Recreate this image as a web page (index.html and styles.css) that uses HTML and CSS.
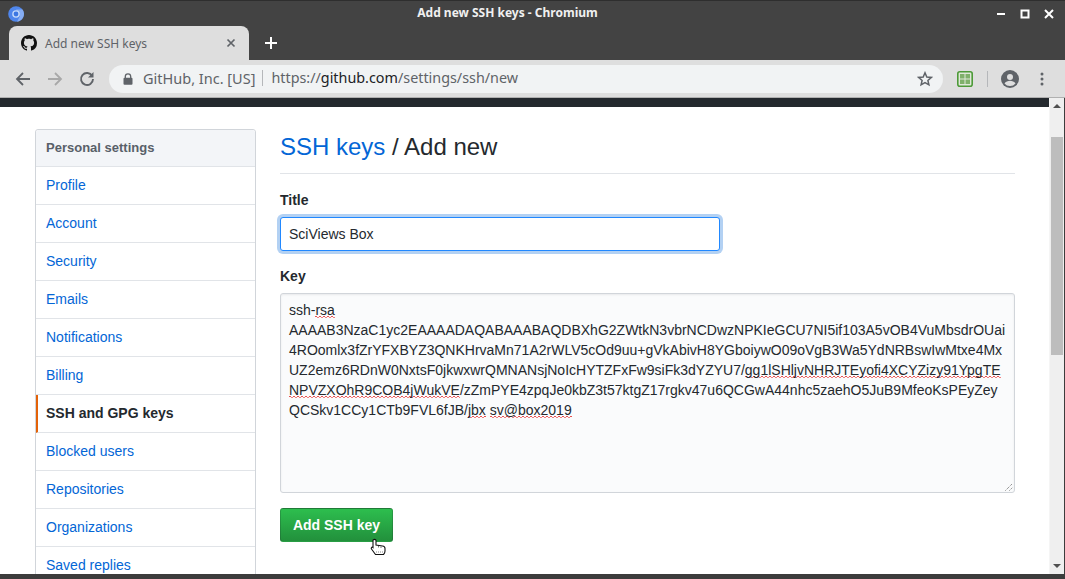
FILE: index.html
```html
<!DOCTYPE html>
<html lang="en">
<head>
<meta charset="utf-8">
<title>Add new SSH keys - Chromium</title>
<link rel="stylesheet" href="styles.css">
</head>
<body>
<div class="window">
  <header class="frame">
    <div class="titlebar">
      <svg class="app-icon" viewBox="0 0 16 16" width="16" height="16"><circle cx="8" cy="8" r="7.800" fill="#4f86ec"/><path d="M8 3.500h6.600A7.800 7.800 0 0 1 9 15.700L12 10z" fill="#86adf3"/><circle cx="8" cy="8" r="3.800" fill="#c4d9fa"/><circle cx="8" cy="8" r="2.400" fill="#3b76e2"/></svg>
      <div class="window-title">Add new SSH keys - Chromium</div>
      <div class="window-controls">
        <svg viewBox="0 0 10 10" width="10" height="10"><path d="M1 5h8" stroke="#fff" stroke-width="2"/></svg>
        <svg viewBox="0 0 10 10" width="10" height="10"><path d="M1.500 1.500h7v7h-7z" fill="none" stroke="#fff" stroke-width="2"/></svg>
        <svg viewBox="0 0 10 10" width="10" height="10"><path d="M1 1l8 8M9 1l-8 8" stroke="#fff" stroke-width="2"/></svg>
      </div>
    </div>
    <div class="tabstrip">
      <div class="tab">
        <svg class="favicon" viewBox="0 0 16 16" width="16" height="16"><path fill="#111" d="M8 0C3.580 0 0 3.580 0 8c0 3.540 2.290 6.530 5.470 7.590.4.070.55-.17.55-.38 0-.19-.01-.82-.01-1.490-2.010.37-2.530-.49-2.690-.94-.09-.23-.48-.94-.82-1.130-.28-.15-.68-.52-.01-.53.63-.01 1.080.58 1.230.82.72 1.210 1.870.87 2.330.66.07-.52.28-.87.51-1.070-1.780-.2-3.640-.89-3.640-3.950 0-.87.31-1.590.82-2.150-.08-.2-.36-1.020.08-2.120 0 0 .67-.21 2.200.82.64-.18 1.320-.27 2-.27s1.360.09 2 .27c1.530-1.040 2.200-.82 2.200-.82.44 1.100.16 1.920.08 2.120.51.56.82 1.270.82 2.150 0 3.070-1.870 3.750-3.650 3.950.29.25.54.73.54 1.480 0 1.070-.01 1.930-.01 2.200 0 .21.15.46.55.38A8.010 8.010 0 0 0 16 8c0-4.420-3.580-8-8-8z"/></svg>
        <span class="tab-title">Add new SSH keys</span>
        <svg class="tab-close" viewBox="0 0 10 10" width="10" height="10"><path d="M1.500 1.500l7 7M8.500 1.500l-7 7" stroke="#5f6368" stroke-width="1.700"/></svg>
      </div>
      <svg class="new-tab" viewBox="0 0 12 12" width="12" height="12"><path d="M6 0v12M0 6h12" stroke="#fff" stroke-width="2"/></svg>
    </div>
  </header>
  <nav class="toolbar">
    <svg class="nav-icon" viewBox="0 0 16 16" width="16" height="16"><path d="M15 8H2M8 2L2 8l6 6" fill="none" stroke="#5f6368" stroke-width="1.800"/></svg>
    <svg class="nav-icon" viewBox="0 0 16 16" width="16" height="16"><path d="M1 8h13M8 2l6 6-6 6" fill="none" stroke="#a8a8a8" stroke-width="1.800"/></svg>
    <svg class="nav-icon" viewBox="0 0 16 16" width="16" height="16"><path d="M13.200 5A6 6 0 1 0 14 8" fill="none" stroke="#5f6368" stroke-width="1.900"/><path d="M14.500 1v5.500H9z" fill="#5f6368"/></svg>
    <div class="omnibox">
      <svg class="lock" viewBox="0 0 10 12" width="10" height="12"><path d="M2.300 5V3.500a2.700 2.700 0 0 1 5.400 0V5" fill="none" stroke="#5f6368" stroke-width="1.300"/><rect x="0.500" y="4.800" width="9" height="7" rx="1" fill="#5f6368"/></svg>
      <span class="org">GitHub, Inc. [US]</span>
      <span class="url"><span class="scheme">https://</span>github.com<span class="scheme">/settings/ssh/new</span></span>
      <svg class="star" viewBox="0 0 16 16" width="16" height="16"><path d="M8 1.800l1.800 4.200 4.500.4-3.400 3 1 4.400L8 11.500l-3.900 2.300 1-4.400-3.400-3 4.500-.4z" fill="none" stroke="#5f6368" stroke-width="1.500"/></svg>
    </div>
    <svg class="ext" viewBox="0 0 16 16" width="16" height="16"><rect x="0.800" y="0.800" width="14.400" height="14.400" rx="2" fill="#dfe8d8" stroke="#4d9a38" stroke-width="1.600"/><path d="M3 3h4.500v4.500H3zM8.500 3H13v4.500H8.500zM3 8.500h4.500V13H3zM8.500 8.500H13V13H8.500z" fill="#7fb06a"/></svg>
    <span class="tool-sep"></span>
    <svg class="avatar" viewBox="0 0 18 18" width="18" height="18"><circle cx="9" cy="9" r="9" fill="#5f6368"/><circle cx="9" cy="7" r="3" fill="#dedede"/><path d="M3.500 13.500c1-2 3.500-2.800 5.500-2.800s4.500.8 5.500 2.800A7 7 0 0 1 9 16a7 7 0 0 1-5.500-2.500z" fill="#dedede"/></svg>
    <svg class="menu" viewBox="0 0 4 14" width="4" height="14"><circle cx="2" cy="2" r="1.500" fill="#5f6368"/><circle cx="2" cy="7" r="1.500" fill="#5f6368"/><circle cx="2" cy="12" r="1.500" fill="#5f6368"/></svg>
  </nav>
  <div class="viewport">
    <div class="page">
      <div class="gh-header"></div>
      <div class="content">
        <aside class="side">
          <div class="side-head">Personal settings</div>
          <a class="side-item">Profile</a>
          <a class="side-item">Account</a>
          <a class="side-item">Security</a>
          <a class="side-item">Emails</a>
          <a class="side-item">Notifications</a>
          <a class="side-item">Billing</a>
          <a class="side-item selected">SSH and GPG keys</a>
          <a class="side-item">Blocked users</a>
          <a class="side-item">Repositories</a>
          <a class="side-item">Organizations</a>
          <a class="side-item">Saved replies</a>
        </aside>
        <main class="main">
          <h1 class="heading"><a>SSH keys</a> / Add new</h1>
          <label class="label">Title</label>
          <div class="input">SciViews Box</div>
          <label class="label key-label">Key</label>
          <div class="textarea">
            <div class="line">ssh-<span class="sp">rsa</span></div>
            <div class="line">AAAAB3NzaC1yc2EAAAADAQABAAABAQDBXhG2ZWtkN3vbrNCDwzNPKIeGCU7NI5if103A5vOB4VuMbsdrOUai</div>
            <div class="line">4ROomlx3fZrYFXBYZ3QNKHrvaMn71A2rWLV5cOd9uu+gVkAbivH8YGboiywO09oVgB3Wa5YdNRBswIwMtxe4Mx</div>
            <div class="line">UZ2emz6RDnW0NxtsF0jkwxwrQMNANsjNoIcHYTZFxFw9siFk3dYZYU7/<span class="sp">gg1lSHljvNHRJTEyofi4XCYZizy91YpgTE</span></div>
            <div class="line"><span class="sp">NPVZXOhR9COB4jWukVE</span>/zZmPYE4zpqJe0kbZ3t57ktgZ17rgkv47u6QCGwA44nhc5zaehO5JuB9MfeoKsPEyZey</div>
            <div class="line">QCSkv1CCy1CTb9FVL6fJB/<span class="sp">jbx</span> <span class="sp">sv@box2019</span></div>
            <svg class="grip" viewBox="0 0 8 8" width="8" height="8"><path d="M0.500 7.500l7-7M4.500 7.500l3-3" stroke="#666" stroke-width="1" stroke-dasharray="1 1"/></svg>
          </div>
          <div class="actions">
            <button class="btn">Add SSH key</button>
            <svg class="cursor" viewBox="0 0 16 18" width="16" height="18"><path d="M3 2.500c0-1.500 3-1.500 3 0V7l6.500 1c1.500.2 2.500 1 2.500 2.500V13c0 2-1 3-1.500 3.500H5.500L1.500 11c-.8-1 .3-2.500 1.500-1.500z" fill="#fff" stroke="#111" stroke-width="1.100"/><path d="M8.500 8v1.500M11 8.500V10" stroke="#555" stroke-width="0.800"/><path d="M6 14h7" stroke="#888" stroke-width="1" stroke-dasharray="1 1"/></svg>
          </div>
        </main>
      </div>
    </div>
    <div class="scrollbar">
      <span class="arrow up"></span>
      <div class="track"><div class="thumb"></div></div>
      <span class="arrow down"></span>
    </div>
  </div>
  <div class="bottom"></div>
</div>
</body>
</html>
```
FILE: styles.css
```css
* { box-sizing: border-box; }
html, body { margin: 0; padding: 0; height: 100%; overflow: hidden; }
body { background: #fff; font-family: "Liberation Sans", Arial, sans-serif; color: #24292e; }
.window { width: 1065px; height: 579px; display: flex; flex-direction: column; overflow: hidden; }
.frame { height: 60px; background: #434343; border-top: 1px solid #2e2e2e; flex: none; font-family: "Noto Sans", sans-serif; }
.titlebar { height: 25px; display: flex; align-items: center; padding: 0 0 0 8px; position: relative; }
.app-icon { flex: none; }
.window-title { position: absolute; left: 0; right: 50px; top: 3px; text-align: center; color: #f0f0f0; font-size: 12px; font-weight: 700; line-height: 18px; }
.window-controls { margin-left: auto; display: flex; gap: 14px; padding-right: 11px; position: relative; }
.tabstrip { height: 34px; display: flex; align-items: center; padding-left: 9px; }
.tab { width: 240px; height: 34px; background: #dedede; border-radius: 8px 8px 0 0; display: flex; align-items: center; padding: 0 13px 0 12px; }
.favicon { flex: none; }
.tab-title { margin-left: 8px; font-size: 12px; color: #5f6368; flex: 1; }
.tab-close { flex: none; }
.new-tab { margin-left: 16px; }
.toolbar { height: 37px; flex: none; background: #dedede; display: flex; align-items: center; padding: 0 0 0 15px; font-family: "Noto Sans", sans-serif; }
.nav-icon { flex: none; margin-right: 16px; }
.omnibox { width: 834px; height: 28px; background: #f1f3f4; border-radius: 14px; margin-left: -2px; display: flex; align-items: center; padding-left: 14px; font-size: 14.5px; position: relative; }
.lock { flex: none; }
.org { margin: 0 0 2px 10px; color: #5f6368; padding-right: 7px; border-right: 1px solid #b5b7ba; line-height: 16px; height: 16px; display: flex; align-items: center; }
.url { margin: 0 0 2px 8px; color: #202124; font-size: 14.35px; }
.scheme { color: #5f6368; }
.star { margin-left: auto; margin-right: 10px; }
.ext { flex: none; margin-left: 14px; }
.tool-sep { width: 1px; height: 16px; background: #b5b7ba; margin-left: 14px; }
.avatar { flex: none; margin-left: 13px; }
.menu { flex: none; margin-left: 21px; }
.viewport { flex: 1; min-height: 0; display: flex; border-top: 1px solid #b0b0b0; }
.page { flex: 1; min-width: 0; overflow: hidden; background: #fff; }
.gh-header { height: 9px; background: #24292e; }
.content { display: flex; padding: 22px 0 0 35px; align-items: flex-start; }
.side { width: 221px; flex: none; border: 1px solid #d1d5da; border-radius: 3px; }
.side-head { height: 37px; background: #f3f5f8; padding: 0 10px; font-size: 13px; font-weight: 700; color: #586069; line-height: 36px; border-bottom: 1px solid #e1e4e8; border-radius: 3px 3px 0 0; }
.side-item { display: block; height: 38px; line-height: 37px; padding: 0 10px; font-size: 14px; color: #0366d6; border-bottom: 1px solid #e1e4e8; }
.selected { font-weight: 700; color: #24292e; border-left: 2px solid #e36209; padding-left: 8px; }
.main { width: 735px; margin-left: 24px; flex: none; }
.heading { margin: 0 0 16px; height: 45px; font-size: 24px; font-weight: 400; line-height: 36px; border-bottom: 1px solid #e1e4e8; padding-bottom: 8px; }
.heading a { color: #0366d6; }
.label { display: block; font-size: 14px; font-weight: 700; line-height: 20px; margin-bottom: 7px; }
.input { width: 440px; height: 34px; border: 1px solid #2188ff; border-radius: 3px; box-shadow: 0 0 0 3px rgba(3,102,214,.3); font-size: 14px; line-height: 32px; padding: 0 8px; background: #fff; }
.key-label { margin-top: 15px; }
.textarea { width: 735px; height: 200px; border: 1px solid #d1d5da; border-radius: 3px; background: #fafbfc; padding: 6px 8px 8px; font-size: 14px; line-height: 20px; box-shadow: inset 0 1px 2px rgba(27,31,35,.075); position: relative; }
.line { white-space: nowrap; }
.sp { background-image: repeating-linear-gradient(90deg, #e8504f 0 2px, transparent 2px 4px), repeating-linear-gradient(90deg, transparent 0 2px, #f08080 2px 4px); background-size: 100% 1px; background-position: 0 14px, 0 15px; background-repeat: no-repeat; }
.grip { position: absolute; right: 1px; bottom: 1px; }
.actions { margin-top: 15px; position: relative; }
.btn { display: block; width: 113px; height: 34px; padding: 0; border: 1px solid rgba(27,31,35,.2); border-radius: 3px; background: linear-gradient(-180deg, #2dbe4e, #22903c); color: #fff; font: 700 14px "Liberation Sans", Arial, sans-serif; }
.cursor { position: absolute; left: 90px; top: 30px; }
.scrollbar { width: 16px; flex: none; background: #efefef; display: flex; flex-direction: column; align-items: center; border-left: 1px solid #f5f5f5; border-right: 1px solid #3c3c3c; }
.arrow { flex: none; width: 0; height: 0; border-left: 4px solid transparent; border-right: 4px solid transparent; }
.up { border-bottom: 4px solid #505050; margin: 6px 0; }
.down { border-top: 4px solid #505050; margin: 6px 0 6px; }
.track { flex: 1; width: 100%; padding: 23px 1px 0 1px; }
.thumb { height: 218px; background: #bdbdbd; }
.bottom { height: 5px; flex: none; background: #3c3c3c; }
```
